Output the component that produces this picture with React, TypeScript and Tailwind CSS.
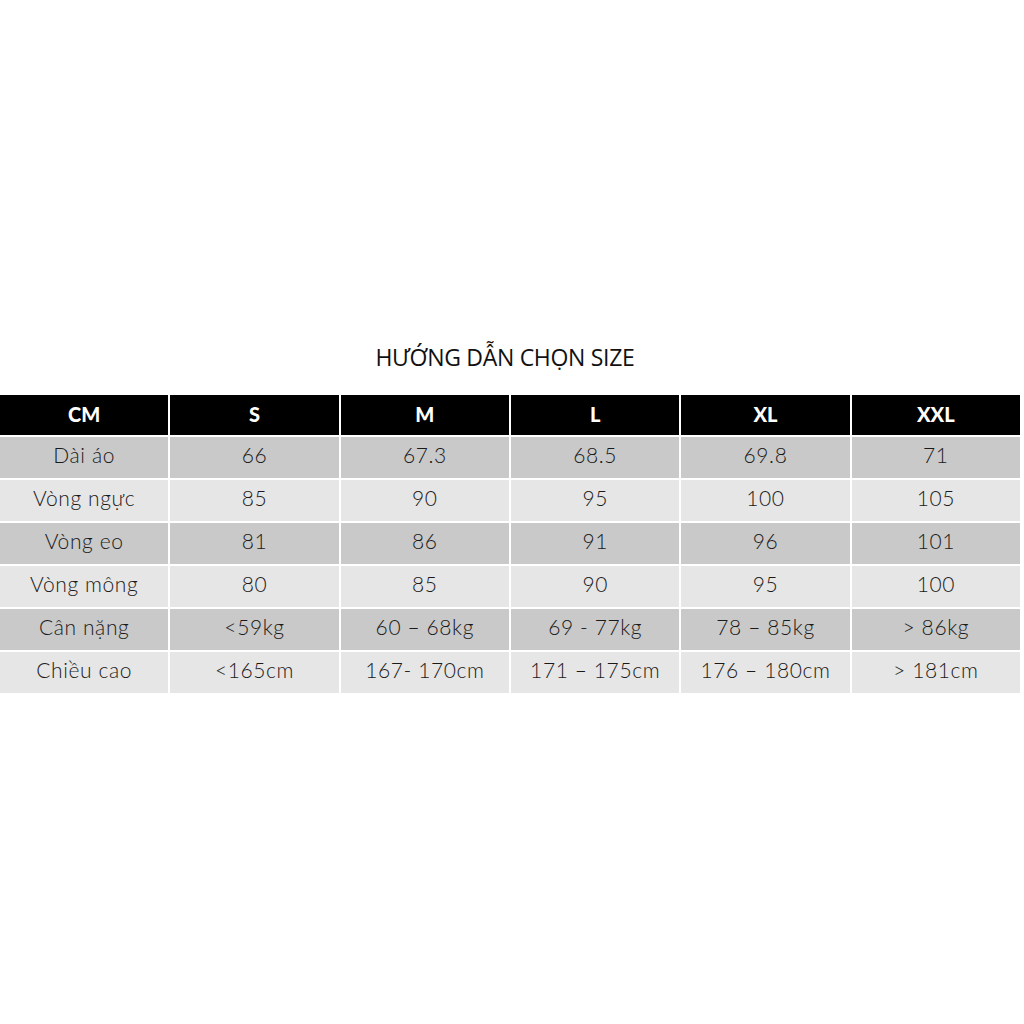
const rows: string[][] = [
  ["Dài áo", "66", "67.3", "68.5", "69.8", "71"],
  ["Vòng ngực", "85", "90", "95", "100", "105"],
  ["Vòng eo", "81", "86", "91", "96", "101"],
  ["Vòng mông", "80", "85", "90", "95", "100"],
  ["Cân nặng", "<59kg", "60 – 68kg", "69 - 77kg", "78 – 85kg", "> 86kg"],
  ["Chiều cao", "<165cm", "167- 170cm", "171 – 175cm", "176 – 180cm", "> 181cm"],
];

const heads = ["CM", "S", "M", "L", "XL", "XXL"];

export default function App() {
  return (
    <div className="w-[1024px] h-[1024px] bg-white pt-[338px]">
      <h1 className="h-[38px] pr-[14px] text-center text-[23px] leading-[38px] text-[#111] font-['Open_Sans',sans-serif] tracking-[-0.3px]">
        HƯỚNG DẪN CHỌN SIZE
      </h1>
      <div className="mt-[19px] w-[1020px] grid grid-cols-6 gap-[2px] font-['Lato',sans-serif]">
        {heads.map((h) => (
          <div key={h} className="h-[40px] pb-[3px] bg-black text-white font-black text-[20px] flex items-center justify-center">
            {h}
          </div>
        ))}
        {rows.map((r, i) =>
          r.map((c, j) => (
            <div
              key={i + "-" + j}
              className={
                "h-[41px] pb-[5px] flex items-center justify-center text-[21px] font-light tracking-[0.6px] text-[#1a1a1a] " +
                (i % 2 === 0 ? "bg-[#c9c9c9]" : "bg-[#e6e6e6]")
              }
            >
              {c}
            </div>
          ))
        )}
      </div>
    </div>
  );
}
